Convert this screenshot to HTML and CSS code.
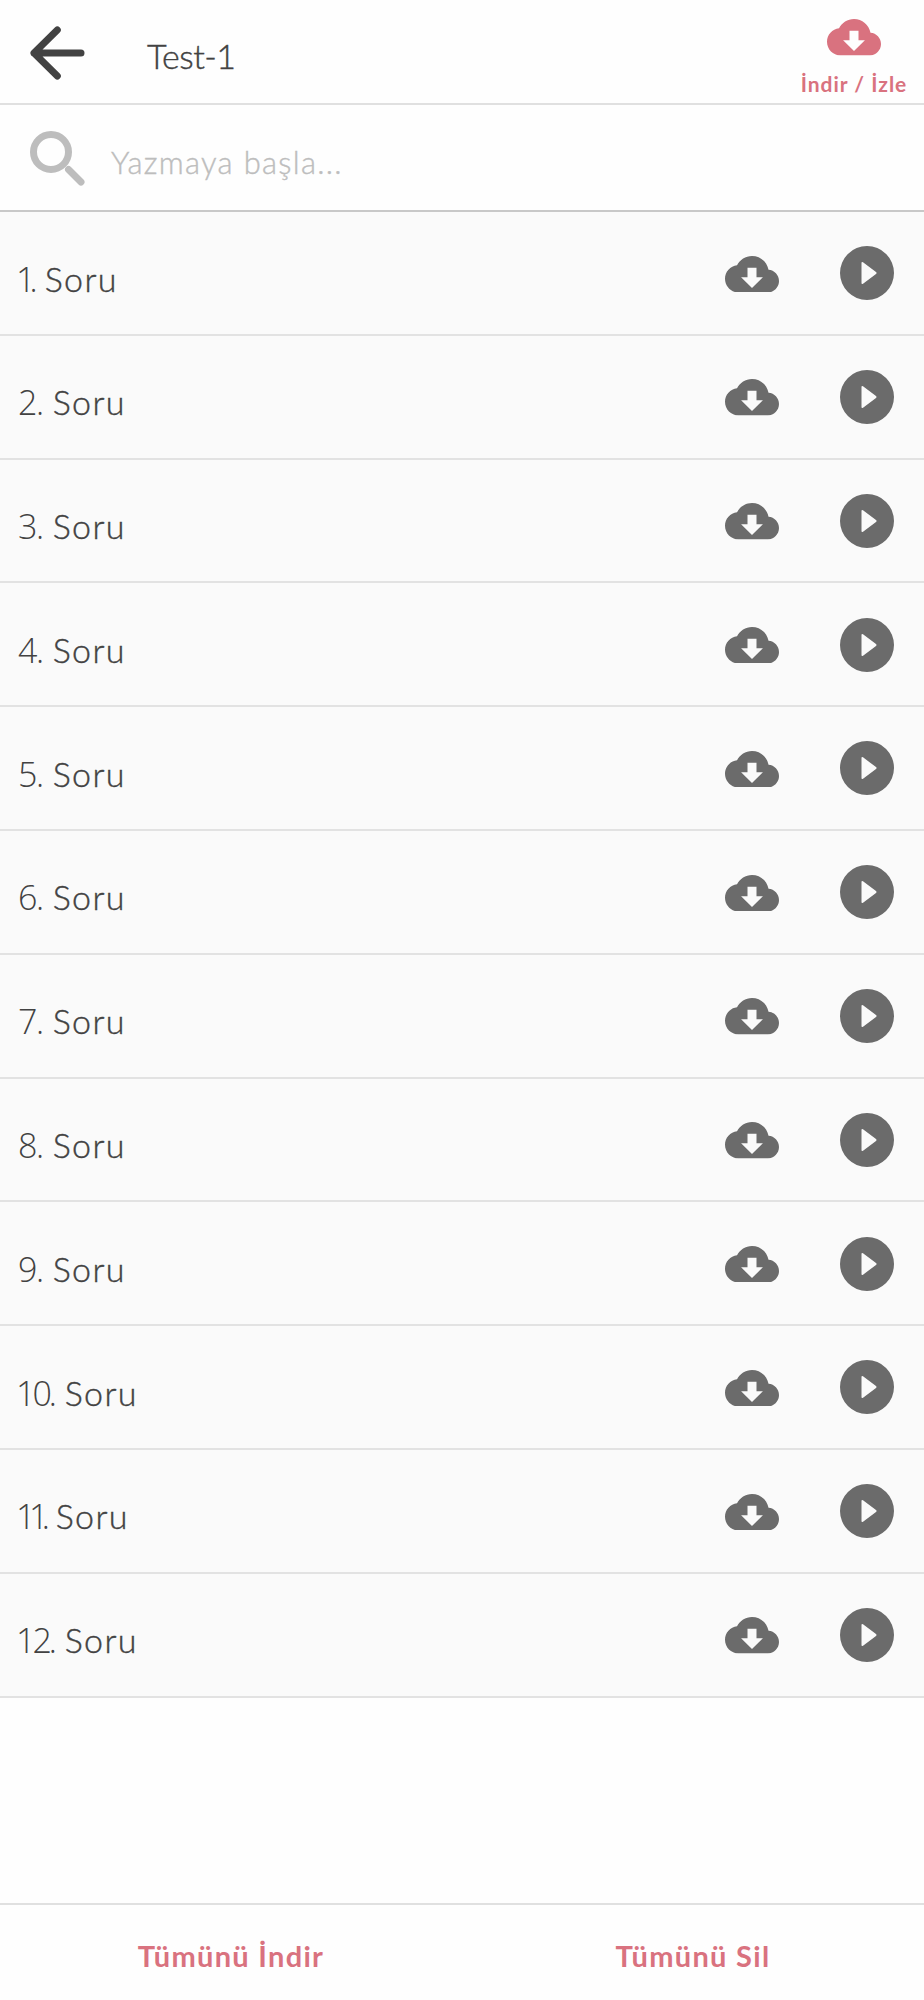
FILE: index.html
```html
<!DOCTYPE html>
<html lang="tr">
<head>
<meta charset="utf-8">
<title>Test-1</title>
<link rel="stylesheet" href="styles.css">
</head>
<body>
<svg class="defs" aria-hidden="true">
  <symbol id="cloud" viewBox="16 96 480 320" preserveAspectRatio="none"><path fill-rule="evenodd" d="M403 217C389 148 329 96 256 96c-58 0-108 33-133 81C63 183 16 234 16 296c0 66 54 120 120 120h260c55 0 100-45 100-100 0-53-41-96-93-99zM216 283v-85h80v85h57l-97 93-97-93z"/></symbol>
  <symbol id="play" viewBox="0 0 54 54"><path fill-rule="evenodd" d="M27 0a27 27 0 1 1 0 54a27 27 0 0 1 0-54zM21.500 17.100v19.800q0 1.800 1.500.8l13-9.800q1.200-.9 0-1.800l-13-9.800q-1.500-1-1.500.8z"/></symbol>
</svg>
<div class="screen">
  <header class="header">
    <svg class="back" viewBox="0 0 55 55"><path d="M51 27H4L27.300 4M4 27L27.300 50"/></svg>
    <h1 class="title">Test-1</h1>
    <div class="mode"><svg class="cloud"><use href="#cloud"/></svg><span class="mode-label">İndir / İzle</span></div>
  </header>
  <div class="search">
    <svg class="lens" viewBox="0 0 55 55"><circle cx="21" cy="21" r="17.500"/><path d="M38.500 38.500L51 51"/></svg>
    <span class="placeholder">Yazmaya başla...</span>
  </div>
  <main class="list">
    <div class="row"><span class="label"><span class="num one">1.</span> Soru</span><svg class="cloud"><use href="#cloud"/></svg><svg class="play"><use href="#play"/></svg></div>
    <div class="row"><span class="label"><span class="num">2.</span> Soru</span><svg class="cloud"><use href="#cloud"/></svg><svg class="play"><use href="#play"/></svg></div>
    <div class="row"><span class="label"><span class="num">3.</span> Soru</span><svg class="cloud"><use href="#cloud"/></svg><svg class="play"><use href="#play"/></svg></div>
    <div class="row"><span class="label"><span class="num">4.</span> Soru</span><svg class="cloud"><use href="#cloud"/></svg><svg class="play"><use href="#play"/></svg></div>
    <div class="row"><span class="label"><span class="num">5.</span> Soru</span><svg class="cloud"><use href="#cloud"/></svg><svg class="play"><use href="#play"/></svg></div>
    <div class="row"><span class="label"><span class="num">6.</span> Soru</span><svg class="cloud"><use href="#cloud"/></svg><svg class="play"><use href="#play"/></svg></div>
    <div class="row"><span class="label"><span class="num">7.</span> Soru</span><svg class="cloud"><use href="#cloud"/></svg><svg class="play"><use href="#play"/></svg></div>
    <div class="row"><span class="label"><span class="num">8.</span> Soru</span><svg class="cloud"><use href="#cloud"/></svg><svg class="play"><use href="#play"/></svg></div>
    <div class="row"><span class="label"><span class="num">9.</span> Soru</span><svg class="cloud"><use href="#cloud"/></svg><svg class="play"><use href="#play"/></svg></div>
    <div class="row"><span class="label"><span class="num ten">10.</span> Soru</span><svg class="cloud"><use href="#cloud"/></svg><svg class="play"><use href="#play"/></svg></div>
    <div class="row"><span class="label"><span class="num eleven">11.</span> Soru</span><svg class="cloud"><use href="#cloud"/></svg><svg class="play"><use href="#play"/></svg></div>
    <div class="row"><span class="label"><span class="num ten">12.</span> Soru</span><svg class="cloud"><use href="#cloud"/></svg><svg class="play"><use href="#play"/></svg></div>
  </main>
  <footer class="footer"><div class="action">Tümünü İndir</div><div class="action">Tümünü Sil</div></footer>
</div>
</body>
</html>
```
FILE: styles.css
```css
* { box-sizing: border-box; }
body { margin: 0; background: #fefefe; color: #424242; font-family: Lato, "Open Sans", sans-serif; }
.defs { display: none; }
svg { display: block; flex: none; }
.screen { display: flex; flex-direction: column; height: 2000px; }
.header { display: flex; height: 105px; padding-left: 30px; border-bottom: 2px solid #e0e0e0; }
.back, .lens { width: 55px; height: 55px; fill: none; stroke-width: 7; stroke-linecap: round; stroke-linejoin: round; }
.back { margin-top: 26px; stroke: #424242; }
.title { margin: 36px 0 0 62px; font-size: 34px; line-height: 40px; font-weight: 300; letter-spacing: -.5px; }
.title, .label, .placeholder { -webkit-text-stroke: .4px currentColor; }
.mode { display: flex; flex-direction: column; align-items: center; width: 140px; margin-left: auto; padding-top: 19px; color: #d9727f; }
.cloud { width: 54px; height: 36.5px; fill: currentColor; }
.mode-label { margin-top: 16px; font-size: 21px; line-height: 24px; font-weight: 700; letter-spacing: 1px; white-space: nowrap; }
.search { display: flex; height: 107px; padding-left: 30px; border-bottom: 2px solid #c8c8c8; }
.lens { margin-top: 26px; stroke: #bdbdbd; }
.placeholder { margin: 39px 0 0 26px; font-size: 31px; line-height: 36px; font-weight: 300; color: #bdbdbd; letter-spacing: 1.3px; }
.list { display: flex; flex-direction: column; background: #fafafa; }
.row { display: flex; height: 123.8px; border-bottom: 2px solid #e2e2e2; }
.label { width: 706px; margin-top: 46.5px; padding-left: 18px; font-size: 34px; line-height: 40px; font-weight: 300; letter-spacing: 1.4px; }
.num { display: inline-block; width: 24px; font-family: "Open Sans", sans-serif; line-height: 30px; letter-spacing: -1.5px; white-space: nowrap; -webkit-text-stroke: 0; }
.one { width: 18px; margin-left: -2px; letter-spacing: -6px; }
.ten { width: 38px; margin-left: -2px; letter-spacing: -3px; }
.eleven { width: 29px; margin-left: -2px; letter-spacing: -6.5px; }
.row .cloud { margin: 43.6px 0 0 19px; color: #6b6b6b; }
.play { width: 54px; height: 54px; margin: 34.3px 0 0 60.6px; fill: #6b6b6b; }
.footer { display: flex; margin-top: auto; height: 97px; padding-top: 32.5px; border-top: 2px solid #e0e0e0; color: #d9727f; font-size: 29px; line-height: 36px; font-weight: 700; }
.action { flex: 1; text-align: center; letter-spacing: 1.3px; }
```
